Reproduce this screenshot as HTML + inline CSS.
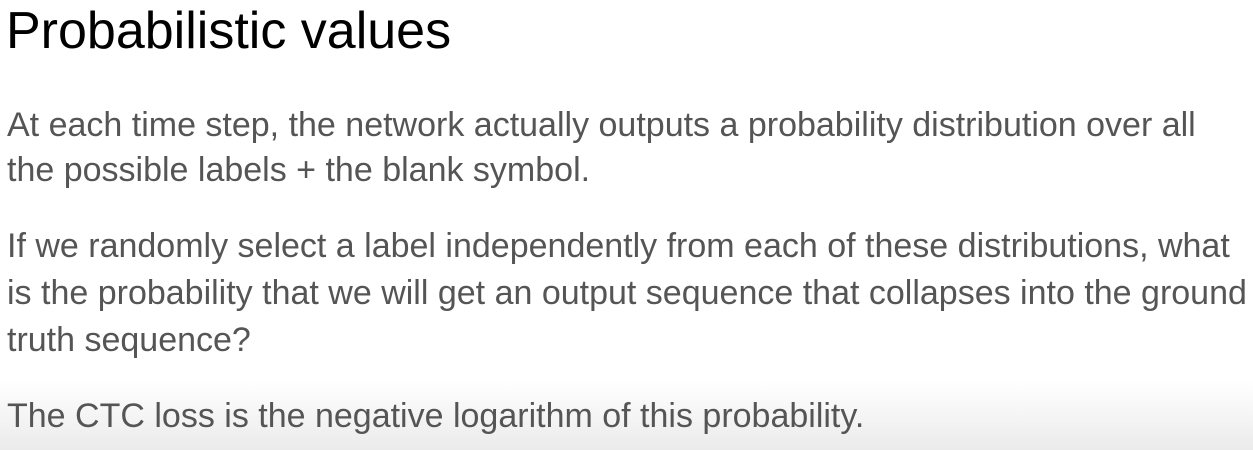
<!DOCTYPE html>
<html><head><style>
html,body{margin:0;padding:0;width:1253px;height:450px;overflow:hidden;background:#fff;}
body{position:relative;background:linear-gradient(to bottom,#fff 0px,#fff 380px,#ebebeb 450px);font-family:"Liberation Sans",Arial,sans-serif;}
.l{position:absolute;left:7px;white-space:nowrap;color:#555;font-size:34px;line-height:40px;}
.t{position:absolute;left:6px;top:1px;font-size:52px;line-height:60px;color:#000;white-space:nowrap;}
</style></head><body>
<div class="t">Probabilistic values</div>
<div class="l" style="top:105px">At each time step, the network actually outputs a probability distribution over all</div>
<div class="l" style="top:150px">the possible labels + the blank symbol.</div>
<div class="l" style="top:226px">If we randomly select a label independently from each of these distributions, what</div>
<div class="l" style="top:273px">is the probability that we will get an output sequence that collapses into the ground</div>
<div class="l" style="top:320px">truth sequence?</div>
<div class="l" style="top:396px">The CTC loss is the negative logarithm of this probability.</div>
</body></html>
